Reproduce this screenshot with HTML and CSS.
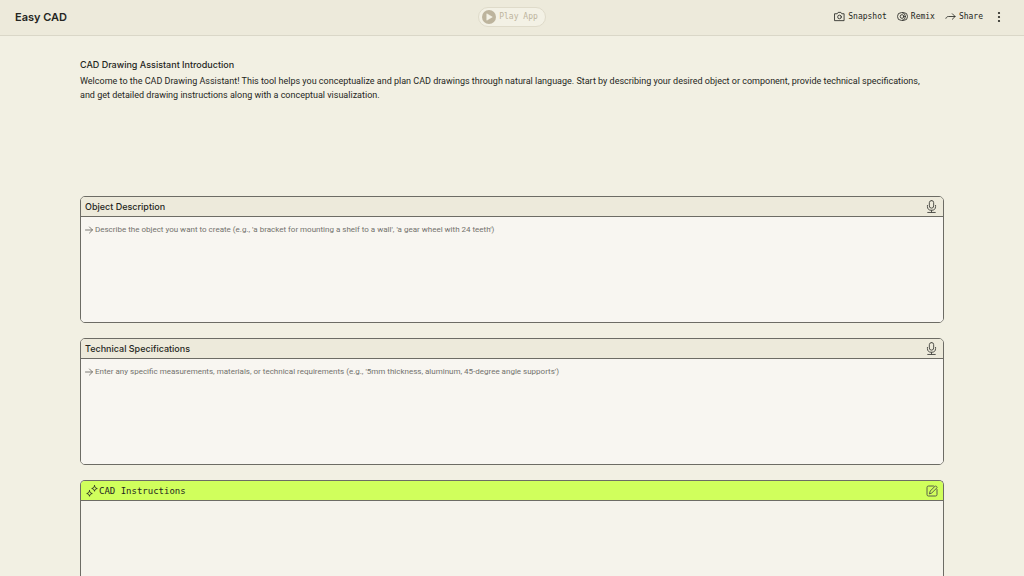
FILE: index.html
```
<!DOCTYPE html>
<html lang="en">
<head>
  <meta charset="UTF-8" />
  <meta name="viewport" content="width=device-width, initial-scale=1.0" />
  <title>Easy CAD</title>
  <link rel="stylesheet" href="styles.css">
</head>
<body>
  <header class="topbar">
    <h1 class="app-name">Easy CAD</h1>
    <button class="play" type="button" disabled>
      <svg width="14" height="14" viewBox="0 0 14 14">
        <circle cx="7" cy="7" r="7" fill="#bdb49d" />
        <path d="M4.8 3.8v6.4L10.3 7z" fill="#f3f1e5" stroke="#f3f1e5" stroke-width=".6" stroke-linejoin="round" />
      </svg>
      Play App
    </button>
    <nav class="actions">
      <button class="action" type="button">
        <svg class="icon" width="11" height="11" viewBox="0 0 24 24">
          <path d="M2 6h5l2-3h6l2 3h5v15H2z" />
          <circle cx="12" cy="13" r="4" />
        </svg>
        Snapshot
      </button>
      <button class="action" type="button">
        <svg class="icon" width="11" height="11" viewBox="0 0 24 24">
          <circle cx="9.5" cy="12" r="8.5" />
          <path d="M12 3.500h2.500a8.500 8.500 0 0 1 0 17H12" />
          <circle cx="11" cy="12" r="4" />
        </svg>
        Remix
      </button>
      <button class="action" type="button">
        <svg class="icon" width="11" height="11" viewBox="0 0 24 24">
          <path d="M2 16c1-3 3-4 6-4h14M16 6l6 6-6 6" />
        </svg>
        Share
      </button>
      <button class="more" type="button" aria-label="More options">
        <svg width="4" height="12" viewBox="0 0 4 12" fill="#22231f">
          <circle cx="2" cy="2" r="1.1" />
          <circle cx="2" cy="6" r="1.1" />
          <circle cx="2" cy="10" r="1.1" />
        </svg>
      </button>
    </nav>
  </header>

  <main class="content">
    <section class="intro">
      <h2>CAD Drawing Assistant Introduction</h2>
      <p>Welcome to the CAD Drawing Assistant! This tool helps you conceptualize and plan CAD drawings through natural language. Start by describing your desired object or component, provide technical specifications, and get detailed drawing instructions along with a conceptual visualization.</p>
    </section>

    <section class="card">
      <div class="card-head">
        <label for="object">Object Description</label>
        <button class="card-button" type="button" aria-label="Dictate object description">
          <svg class="icon" width="13" height="13" viewBox="0 0 24 24">
            <rect x="8" y="1" width="8" height="14" rx="4" />
            <path d="M4.500 10v2a7.500 7 0 0 0 15 0v-2M12 19v4M5 23h14" />
          </svg>
        </button>
      </div>
      <div class="card-body">
        <svg class="icon arrow" width="8" height="8" viewBox="0 0 16 16">
          <path d="M1 8h14M9 2l6 6-6 6" />
        </svg>
        <textarea id="object" placeholder="Describe the object you want to create (e.g., 'a bracket for mounting a shelf to a wall', 'a gear wheel with 24 teeth')"></textarea>
      </div>
    </section>

    <section class="card">
      <div class="card-head">
        <label for="specs">Technical Specifications</label>
        <button class="card-button" type="button" aria-label="Dictate technical specifications">
          <svg class="icon" width="13" height="13" viewBox="0 0 24 24">
            <rect x="8" y="1" width="8" height="14" rx="4" />
            <path d="M4.500 10v2a7.500 7 0 0 0 15 0v-2M12 19v4M5 23h14" />
          </svg>
        </button>
      </div>
      <div class="card-body">
        <svg class="icon arrow" width="8" height="8" viewBox="0 0 16 16">
          <path d="M1 8h14M9 2l6 6-6 6" />
        </svg>
        <textarea id="specs" placeholder="Enter any specific measurements, materials, or technical requirements (e.g., '5mm thickness, aluminum, 45-degree angle supports')"></textarea>
      </div>
    </section>

    <section class="card card-output">
      <div class="card-head">
        <h2 class="output-title">
          <svg class="icon" width="12" height="12" viewBox="0 0 24 24">
            <path d="M17 1.500c.8 3.500 2 4.700 5.500 5.500-3.500.8-4.700 2-5.500 5.500-.8-3.500-2-4.700-5.500-5.500 3.500-.8 4.700-2 5.500-5.500z" />
            <path d="M7 11.500c.8 3.500 2 4.700 5.500 5.500-3.500.8-4.700 2-5.500 5.500-.8-3.500-2-4.700-5.500-5.500 3.500-.8 4.700-2 5.500-5.500z" />
          </svg>
          CAD Instructions
        </h2>
        <button class="card-button" type="button" aria-label="Edit instructions">
          <svg class="icon" width="12" height="12" viewBox="0 0 24 24">
            <path d="M15 2H5a3 3 0 0 0-3 3v14a3 3 0 0 0 3 3h14a3 3 0 0 0 3-3V9" />
            <path d="M7 17l1.500-5L19 1.500 22.500 5 12 15.500z" />
          </svg>
        </button>
      </div>
      <div class="card-body"></div>
    </section>
  </main>
</body>
</html>
```
FILE: styles.css
```
* {
  box-sizing: border-box;
}
body {
  display: flex;
  flex-direction: column;
  margin: 0;
  height: 100vh;
  overflow: hidden;
  background-color: #f2f0e3;
  color: #252622;
  font-family: Inter, "Liberation Sans", sans-serif;
  font-size: 9px;
}
button {
  padding: 0;
  border: none;
  background: none;
  color: inherit;
  cursor: pointer;
}
h1, h2, p {
  margin: 0;
}
svg {
  display: block;
  flex: none;
}
.icon {
  fill: none;
  stroke: currentColor;
  stroke-width: 1.8;
  stroke-linecap: round;
  stroke-linejoin: round;
}

/* Top bar */
.topbar {
  display: grid;
  flex: none;
  grid-template-columns: 1fr auto 1fr;
  align-items: center;
  height: 36px;
  padding: 0 15px 2px;
  background-color: #edeadb;
  border-bottom: 1px solid #dad7c8;
}
.app-name {
  font-size: 11px;
  font-weight: 600;
}
.play, .action {
  display: flex;
  align-items: center;
  gap: 3px;
  font-family: "DejaVu Sans Mono", monospace;
  font-size: 8px;
}
.play {
  height: 20px;
  padding: 0 7px 0 3px;
  border: 1px solid #dfdbca;
  border-radius: 10px;
  background-color: #f3f1e5;
  color: #bdb49d;
  cursor: default;
}
.actions {
  display: flex;
  justify-content: flex-end;
  align-items: center;
  gap: 10px;
}
.more {
  padding: 0 8px 0 4px;
}

/* Page content */
.content {
  display: flex;
  flex: 1;
  flex-direction: column;
  min-height: 0;
  padding: 22px 80px 0;
  overflow: hidden;
}
.intro {
  flex: none;
  height: 138px;
  padding-right: 16px;
}
.intro h2 {
  font-size: 9px;
  font-weight: 500;
  line-height: 14px;
}
.intro p {
  margin-top: 2px;
  font-family: Roboto, sans-serif;
  line-height: 14px;
}

/* Cards */
.card {
  flex: none;
  margin-bottom: 15px;
  border: 1px solid #6d6c65;
  border-radius: 5px;
  overflow: hidden;
}
.card-head {
  display: flex;
  justify-content: space-between;
  align-items: center;
  height: 20px;
  padding: 0 5px 0 4px;
  border-bottom: 1px solid #6d6c65;
  background-color: #edeadb;
  font-weight: 500;
}
.card-button {
  color: #4d4d47;
}
.card-body {
  display: flex;
  gap: 2px;
  height: 105px;
  padding: 6px 4px;
  background-color: #f8f6f1;
  color: #6f6e69;
}
.arrow {
  margin-top: 3px;
}
textarea {
  flex: 1;
  padding: 0;
  border: none;
  outline: none;
  resize: none;
  background: none;
  color: #252622;
  font-family: Roboto, sans-serif;
  font-size: 8px;
  line-height: 14px;
}
textarea::placeholder {
  color: #73726d;
}
/* The output card runs on to the bottom of the window */
.card-output {
  display: flex;
  flex: 1;
  flex-direction: column;
  min-height: 0;
  margin-bottom: 0;
  border-bottom: none;
  border-radius: 5px 5px 0 0;
}
.card-output .card-head {
  flex: none;
  background-color: #d0ff5c;
}
.card-output .card-body {
  flex: 1;
  height: auto;
  background-color: #f5f3eb;
}
.output-title {
  display: flex;
  align-items: center;
  gap: 1px;
  padding-left: 1px;
  font-family: "DejaVu Sans Mono", monospace;
  font-size: 9px;
  font-weight: 400;
}
```
